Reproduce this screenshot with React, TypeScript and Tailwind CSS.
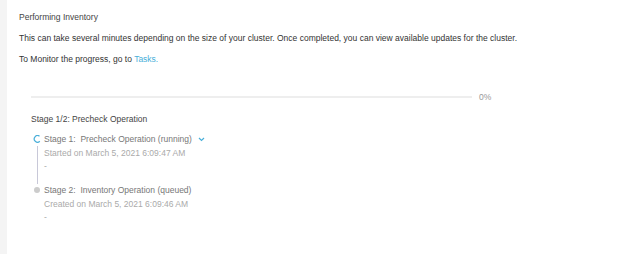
const STAGES = [
  {
    label: 'Stage 1:  Precheck Operation (running)',
    time: 'Started on March 5, 2021 6:09:47 AM',
    running: true,
  },
  {
    label: 'Stage 2:  Inventory Operation (queued)',
    time: 'Created on March 5, 2021 6:09:46 AM',
    running: false,
  },
]

function Spinner() {
  return (
    <svg width="8" height="8" viewBox="0 0 8 8" className="shrink-0">
      <path d="M6.5 1.2 A3.3 3.3 0 1 0 6.8 6.3" fill="none" stroke="#49afd9" strokeWidth="1.2" />
    </svg>
  )
}

export default function App() {
  return (
    <div className="flex h-[254px] w-[624px] bg-white font-['Liberation_Sans',Arial,sans-serif] text-[8.5px]">
      <div className="w-[7px] shrink-0 bg-[#f4f4f4]" />
      <div className="flex-1 pl-3 pt-[11px]">
        <div className="text-[#444] leading-[12px]">Performing Inventory</div>
        <p className="mt-[9px] text-[#333] leading-[12px]">
          This can take several minutes depending on the size of your cluster. Once completed, you can view available updates for the cluster.
        </p>
        <p className="mt-[9px] text-[#333] leading-[12px]">
          To Monitor the progress, go to <span className="text-[#49afd9]">Tasks.</span>
        </p>

        <div className="ml-3 mt-[26px]">
          <div className="flex items-center">
            <div className="h-[2px] w-[441px] bg-[#eeeeee]" />
            <span className="ml-[7px] text-[#999]">0%</span>
          </div>

          <div className="mt-[9px] text-[#444] leading-[12px]">Stage 1/2: Precheck Operation</div>

          <div className="mt-[8px]">
            {STAGES.map((s, i) => (
              <div key={s.label} className="flex">
                <div className="flex w-[12px] shrink-0 flex-col items-center">
                  <div className="flex h-[13px] items-center">
                    {s.running ? <Spinner /> : <div className="h-[6px] w-[6px] rounded-full bg-[#ccc]" />}
                  </div>
                  {i < STAGES.length - 1 && <div className="w-px flex-1 bg-[#c8c8d8]" />}
                </div>
                <div className="pb-[11px] pl-[1px] leading-[13px]">
                  <div className="flex items-center text-[#777]">
                    <span className="whitespace-pre">{s.label}</span>
                    {s.running && (
                      <svg width="7" height="5" viewBox="0 0 7 5" className="ml-[6px]">
                        <path d="M1 1 L3.5 3.5 L6 1" fill="none" stroke="#49afd9" strokeWidth="1.2" />
                      </svg>
                    )}
                  </div>
                  <div className="mt-[1px] text-[#aaa]">{s.time}</div>
                  <div className="text-[#aaa]">-</div>
                </div>
              </div>
            ))}
          </div>
        </div>
      </div>
    </div>
  )
}
